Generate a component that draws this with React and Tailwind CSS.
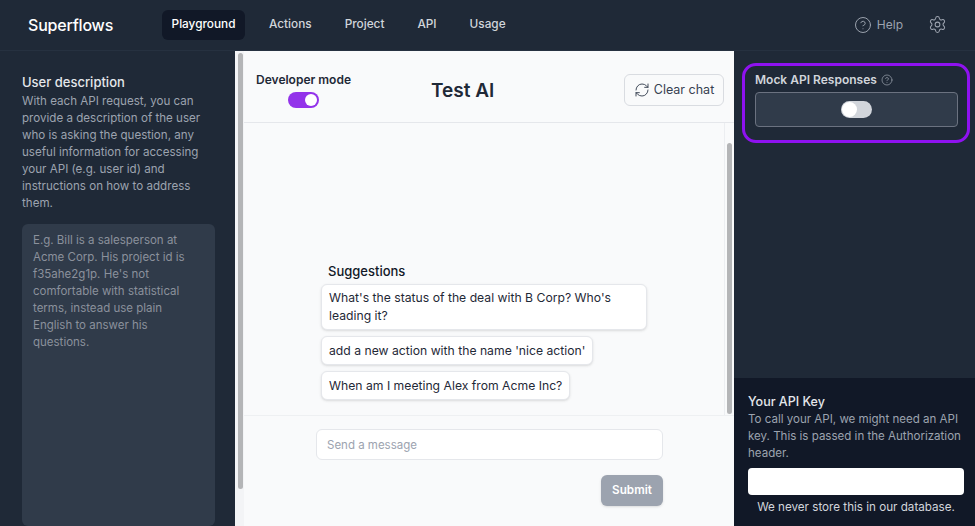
import { RefreshCw, Settings, CircleHelp } from 'lucide-react';

const NAV = ['Actions', 'Project', 'API', 'Usage'];

const SUGGESTIONS = [
  "What's the status of the deal with B Corp? Who's leading it?",
  "add a new action with the name 'nice action'",
  'When am I meeting Alex from Acme Inc?',
];

const Header = () => (
  <header className="h-[51px] shrink-0 bg-[#1f2937] border-b border-[#263140] flex items-center pl-[28px] pr-[28px]">
    <div className="text-[16px] font-medium text-white w-[134px] tracking-[-0.2px]">Superflows</div>
    <div className="h-[30px] w-[83px] rounded-md bg-[#111827] text-white text-[11.8px] font-medium flex items-center justify-center">
      Playground
    </div>
    <div className="flex ml-[24px] gap-[33px] text-[11.8px] font-medium text-[#d1d5db]">
      {NAV.map((item) => (
        <span key={item}>{item}</span>
      ))}
    </div>
    <div className="ml-auto flex items-center text-[#9ca3af]">
      <CircleHelp size={18} strokeWidth={1.3} />
      <span className="text-[12px] ml-[5px]">Help</span>
      <Settings size={19} strokeWidth={1.3} className="ml-[25px] mb-[2px]" />
    </div>
  </header>
);

const LeftPanel = () => (
  <aside className="w-[235px] shrink-0 bg-[#1f2937] pl-[22px] pr-[20px] pt-[23px] flex flex-col">
    <h2 className="text-[13px] leading-[16px] font-medium text-[#e5e7eb]">User description</h2>
    <p className="text-[11.6px] leading-[17px] text-[#9ca3af] mt-[3px] pr-[11px]">
      With each API request, you can provide a description of the user who is asking the question, any useful information for accessing your API (e.g. user id) and instructions on how to address them.
    </p>
    <div className="mt-[12px] flex-1 bg-[#303b4a] rounded-md pl-[11px] pr-[12px] pt-[8px] text-[11.5px] leading-[17px] text-[#8b919c]">
      E.g. Bill is a salesperson at Acme Corp. His project id is f35ahe2g1p. He's not comfortable with statistical terms, instead use plain English to answer his questions.
    </div>
  </aside>
);

const Chat = () => (
  <main className="flex-1 flex min-w-0">
    <div className="w-[9px] shrink-0 bg-[#f3f4f6] relative">
      <div className="absolute left-[3px] top-[2px] w-[5px] h-[436px] rounded bg-[#b4b5b7]" />
    </div>
    <div className="flex-1 min-w-0 bg-[#f9fafb] flex flex-col">
      <div className="h-[72px] shrink-0 border-b border-[#e5e7eb] flex items-start pl-[11px] pr-[10px]">
        <div className="w-[97px] mt-[21px] flex flex-col items-center">
          <span className="text-[12px] leading-[15px] font-semibold text-[#1f2937] whitespace-nowrap">Developer mode</span>
          <div className="mt-[5px] w-[31px] h-[16px] rounded-full bg-[#9333ea] relative -ml-[1px]">
            <div className="absolute right-[2px] top-[2px] w-[12px] h-[12px] rounded-full bg-white" />
          </div>
        </div>
        <h1 className="mt-[27px] ml-[79px] text-[19px] leading-[26px] font-semibold text-[#1f2937]">Test AI</h1>
        <button className="ml-auto mt-[23px] h-[32px] w-[100px] rounded-md border border-[#d9dce1] bg-[#f9fafb] flex items-center justify-center gap-[4px] text-[#374151] text-[12.5px]">
          <RefreshCw size={16} strokeWidth={1.4} />
          Clear chat
        </button>
      </div>

      <div className="flex-1 flex min-h-0">
        <div className="flex-1 flex flex-col justify-end pl-[77px] pb-[15px]">
          <div className="text-[13px] leading-[18px] font-medium text-[#111827] ml-[7px] mb-[4px]">Suggestions</div>
          <div className="flex flex-col items-start gap-[6px]">
            {SUGGESTIONS.map((text) => (
              <div
                key={text}
                className="max-w-[326px] min-h-[29px] flex items-center bg-white border border-[#e5e7eb] rounded-md shadow-sm px-[7px] py-[4px] text-[12.2px] leading-[18px] text-[#1f2937]"
              >
                {text}
              </div>
            ))}
          </div>
        </div>
        <div className="w-[10px] shrink-0 bg-[#f9fafb] border-l border-[#eceef1] relative">
          <div className="absolute left-[2px] top-[20px] w-[5px] h-[271px] rounded bg-[#b4b5b7]" />
        </div>
      </div>

      <div className="h-[111px] shrink-0 border-t border-[#eef0f2] pl-[72px] pr-[71px] pt-[13px] flex flex-col">
        <div className="h-[31px] bg-white border border-[#e5e7eb] rounded-md flex items-center pl-[10px] pt-[2px] text-[11.5px] text-[#9ca3af]">
          Send a message
        </div>
        <button className="self-end mt-[15px] w-[62px] h-[31px] rounded-md bg-[#9ca3af] text-white text-[11.7px] font-semibold shadow-sm">
          Submit
        </button>
      </div>
    </div>
  </main>
);

const RightPanel = () => (
  <aside className="w-[241px] shrink-0 flex flex-col bg-[#1f2937]">
    <div className="flex-1 pt-[12px] pl-[8px]">
      <div className="w-[228px] h-[80px] rounded-[14px] border-[3px] border-[#8f12f0] pl-[10px] pr-[9px] pt-[6px]">
        <div className="flex items-center gap-[4px] text-[12px] leading-[15px] font-semibold text-[#d1d5db]">
          Mock API Responses
          <CircleHelp size={12} strokeWidth={1.4} className="text-[#9ca3af]" />
        </div>
        <div className="mt-[5px] h-[35px] rounded bg-[#303b4a] border border-[#6b7280] flex items-center justify-center">
          <div className="w-[31px] h-[17px] rounded-full bg-[#d1d5db] relative">
            <div className="absolute left-[1px] top-[1px] w-[15px] h-[15px] rounded-full bg-white" />
          </div>
        </div>
      </div>
    </div>
    <div className="h-[148px] shrink-0 bg-[#111827] pl-[14px] pr-[11px] pt-[15px]">
      <h3 className="text-[12.5px] leading-[17px] font-medium text-[#e5e7eb]">Your API Key</h3>
      <p className="mt-[1px] text-[11.55px] leading-[17px] text-[#9ca3af]">
        To call your API, we might need an API key. This is passed in the Authorization header.
      </p>
      <div className="mt-[6px] h-[27px] rounded-sm bg-white" />
      <p className="mt-[4px] text-center text-[11.65px] leading-[17px] text-[#d1d5db]">We never store this in our database.</p>
    </div>
  </aside>
);

export default function App() {
  return (
    <div className="h-[526px] w-[975px] overflow-hidden flex flex-col font-['Inter',sans-serif] bg-[#1f2937]">
      <Header />
      <div className="flex-1 flex min-h-0">
        <LeftPanel />
        <Chat />
        <RightPanel />
      </div>
    </div>
  );
}
